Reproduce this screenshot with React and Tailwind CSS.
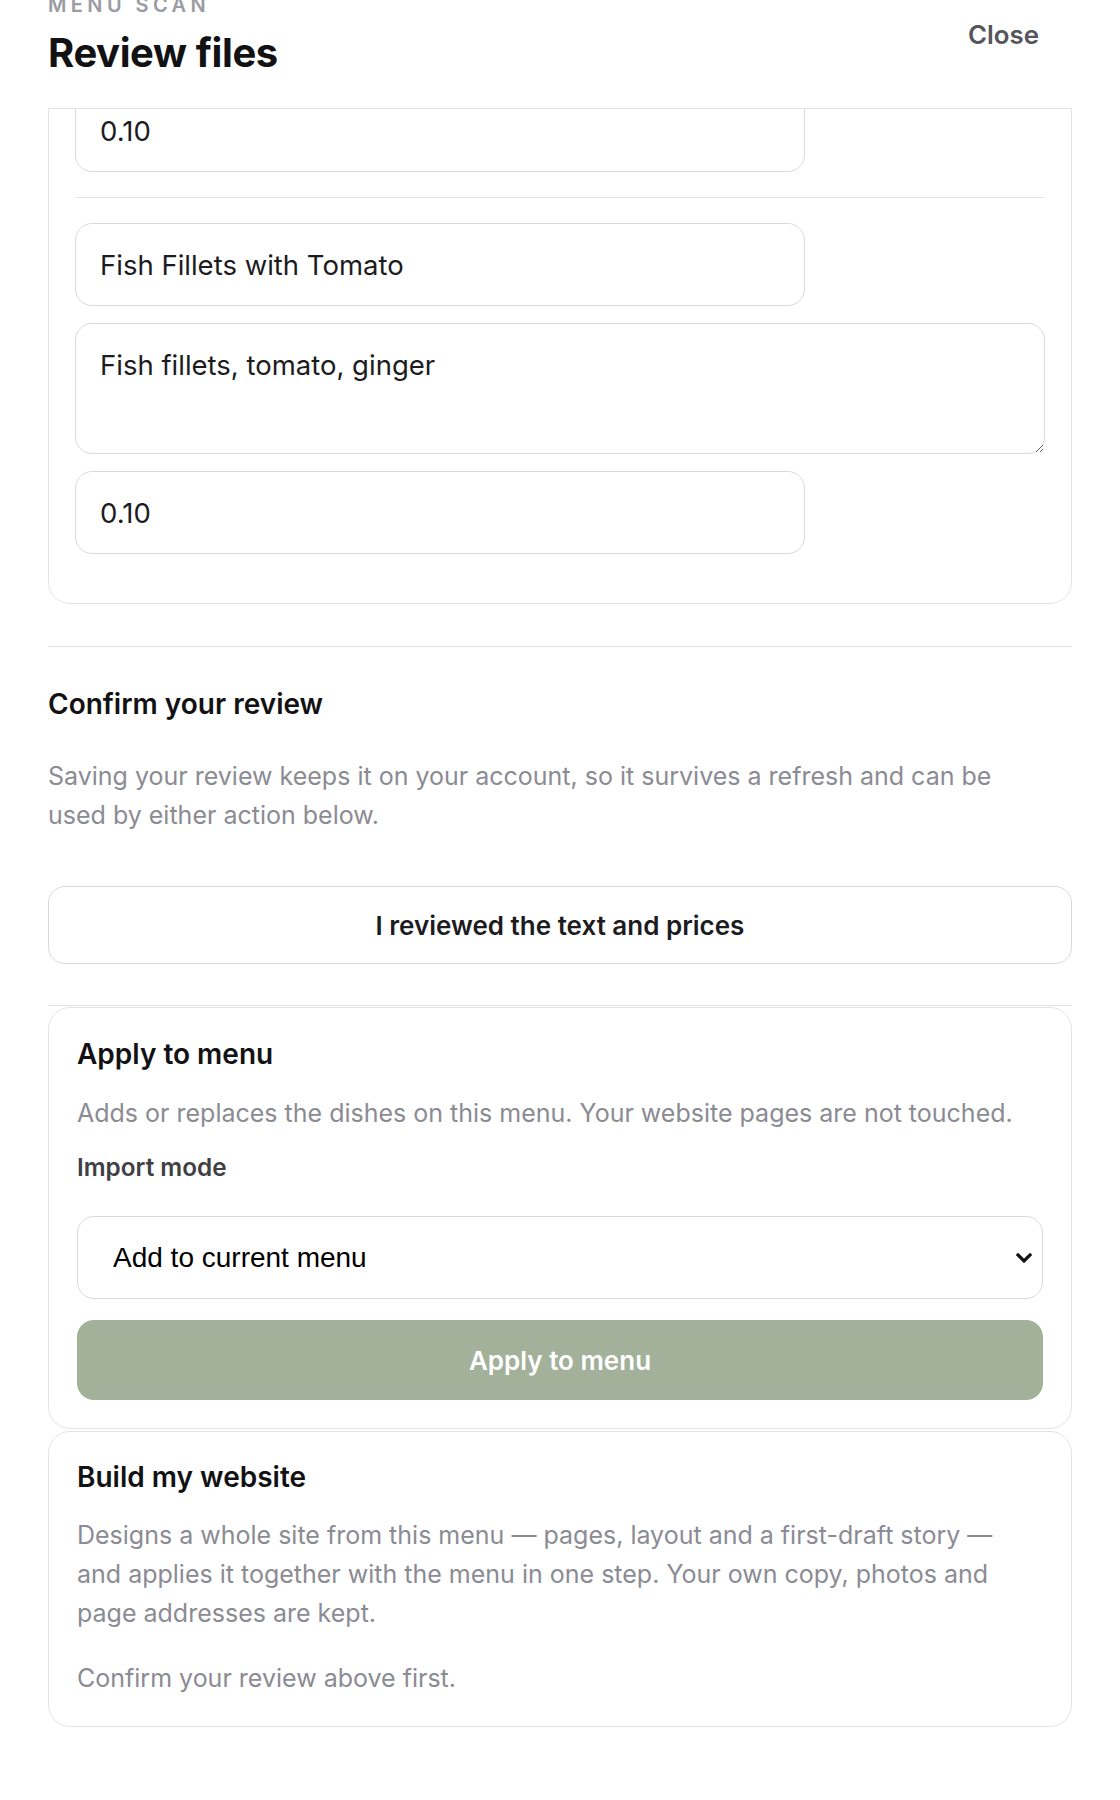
import React from 'react';

const font = { fontFamily: 'Inter, "Noto Sans", sans-serif' };

const fieldClass =
  'block h-[83px] rounded-[17px] border border-[#dadade] bg-white px-6 text-[27.5px] text-[#1c1c1f] outline-none';

const ActionCard = ({ title, children, top = 'pt-[28px]' }) => (
  <div className={`rounded-[22px] border border-[#e4e4e7] bg-white px-[28px] pb-[28px] ${top}`}>
    <h3 className="text-[28px] font-semibold leading-[35px] text-[#121214]">{title}</h3>
    {children}
  </div>
);

export default function App() {
  return (
    <div className="min-h-[1800px] bg-white px-12 text-[#121214]" style={font}>
      {/* header */}
      <div className="flex items-start justify-between pb-[31px]">
        <div>
          <div className="-mt-[5px] text-[20px] font-semibold uppercase leading-none tracking-[0.22em] text-[#9b9ba3]">
            Menu scan
          </div>
          <h1 className="mt-[14px] text-[40px] font-bold leading-[1.2] tracking-[-0.01em] text-[#121214]">
            Review files
          </h1>
        </div>
        <button className="mr-[33px] mt-[16px] text-[25.8px] font-semibold leading-[1.5] text-[#55555c]">
          Close
        </button>
      </div>

      {/* scrolled dish list, top part cut off */}
      <div className="overflow-hidden rounded-b-[22px] border border-[#e4e4e7]">
        <div className="px-[26px] pb-[49px]">
          <div className="-mt-[20px]">
            <input className={`${fieldClass} w-[730px]`} defaultValue="0.10" />
          </div>
          <div className="mt-[25px] flex flex-col gap-[17px] border-t border-[#e4e4e7] pt-[25px]">
            <input className={`${fieldClass} w-[730px]`} defaultValue="Fish Fillets with Tomato" />
            <textarea
              className="block h-[131px] w-full rounded-[17px] border border-[#dadade] bg-white px-6 pt-[21px] text-[27.5px] leading-[1.5] text-[#1c1c1f] outline-none"
              defaultValue="Fish fillets, tomato, ginger"
            />
            <input className={`${fieldClass} w-[730px]`} defaultValue="0.10" />
          </div>
        </div>
      </div>

      {/* confirm */}
      <div className="mt-[42px] border-t border-[#e4e4e7] pt-[40px]">
        <h2 className="text-[28px] font-semibold leading-[35px] text-[#121214]">Confirm your review</h2>
        <p className="mt-[35px] max-w-[975px] text-[25px] leading-[39.2px] text-[#8b8b93]">
          Saving your review keeps it on your account, so it survives a refresh and can be used by either action below.
        </p>
        <button className="mt-[51px] flex h-[78px] w-full items-center justify-center rounded-[17px] border border-[#dadade] bg-white text-[26px] font-semibold text-[#1c1c1f]">
          I reviewed the text and prices
        </button>
      </div>

      {/* actions */}
      <div className="mt-[41px] border-t border-[#e4e4e7] pt-[1px]">
        <ActionCard title="Apply to menu" top="pt-[29px]">
          <p className="mt-[22px] text-[25px] leading-[39.2px] text-[#8b8b93]">
            Adds or replaces the dishes on this menu. Your website pages are not touched.
          </p>
          <label className="mt-[15px] block text-[24.3px] font-semibold leading-[1.5] text-[#3f3f46]">
            Import mode
          </label>
          <div className="relative mt-[31px]">
            <select
              className="block h-[83px] w-full appearance-none rounded-[17px] border border-[#dadade] bg-white pl-[35px] pr-[50px] text-[28px] text-black outline-none"
              style={{ fontFamily: '"Liberation Sans", Arial, sans-serif' }}
              defaultValue="add"
            >
              <option value="add">Add to current menu</option>
              <option value="replace">Replace current menu</option>
            </select>
            <svg
              className="pointer-events-none absolute right-[11px] top-1/2 -translate-y-1/2"
              width="16"
              height="11"
              viewBox="0 0 16 11"
              fill="none"
            >
              <path d="M2 2.5l6 6 6-6" stroke="#111" strokeWidth="3.2" strokeLinecap="square" />
            </svg>
          </div>
          <button className="mt-[21px] flex h-[80px] w-full items-center justify-center rounded-[17px] bg-[#a3b09a] text-[26px] font-semibold text-white">
            Apply to menu
          </button>
        </ActionCard>

        <div className="mt-[2px]">
          <ActionCard title="Build my website">
            <p className="mt-[21px] max-w-[940px] text-[25px] leading-[39.2px] text-[#8b8b93]">
              Designs a whole site from this menu — pages, layout and a first-draft story — and applies it together with
              the menu in one step. Your own copy, photos and page addresses are kept.
            </p>
            <p className="mt-[25px] text-[25px] leading-[39.2px] text-[#8b8b93]">Confirm your review above first.</p>
          </ActionCard>
        </div>
      </div>
    </div>
  );
}
